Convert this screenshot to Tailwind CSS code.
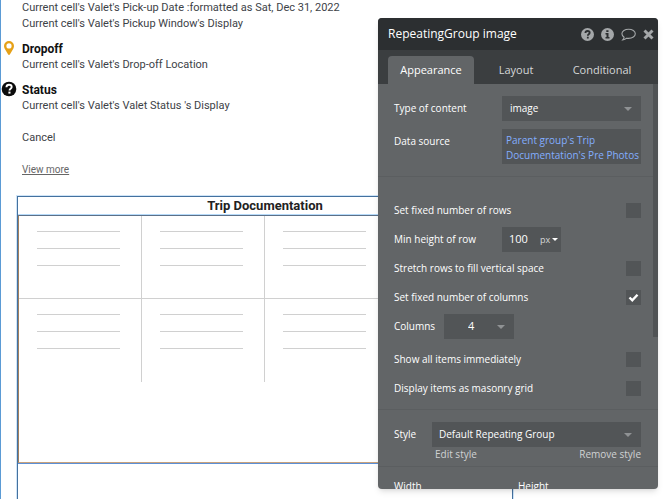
<!DOCTYPE html>
<html lang="en">
<head>
    <meta charset="UTF-8">
    <title>RepeatingGroup image</title>
    <script src="https://cdn.jsdelivr.net/npm/@tailwindcss/browser@4"></script>
</head>
<body class="relative h-screen overflow-hidden bg-white font-['Roboto',sans-serif] text-[11px] text-[#3d4247]">
    <!-- Canvas -->
    <main class="flex h-full flex-col border-l border-[#5b9bd5]">
        <section class="pl-[21px] leading-4">
            <p>Current cell's Valet's Pick-up Date :formatted as Sat, Dec 31, 2022</p>
            <p>Current cell's Valet's Pickup Window's Display</p>
            <div class="relative mt-[9px]">
                <svg class="absolute -left-[19px] -top-px h-4 w-3" viewBox="0 0 12 16" fill="#e6a117">
                    <path fill-rule="evenodd" d="M6 1a5 5 0 0 1 5 5c0 1-.3 1.800-.6 2.500L7 14.200c-.4.900-1.600.9-2 0L1.600 8.500C1.300 7.800 1 7 1 6a5 5 0 0 1 5-5zm0 2.300a2.600 2.600 0 1 0 0 5.200 2.600 2.600 0 0 0 0-5.200z"/>
                </svg>
                <h2 class="text-xs leading-4 font-bold text-[#111]">Dropoff</h2>
                <p>Current cell's Valet's Drop-off Location</p>
            </div>
            <div class="relative mt-[9px]">
                <svg class="absolute -left-[21px] -top-px size-4" viewBox="0 0 16 16">
                    <circle cx="8" cy="8" r="7.300" fill="#0b0b0b"/>
                    <path d="M5.400 6.200C5.500 4.500 6.600 3.700 8 3.700c1.600 0 2.700.9 2.700 2.200 0 1.800-2.200 1.900-2.200 3.500" fill="none" stroke="#fff" stroke-width="1.900"/>
                    <path d="M7.400 10.600h2.100v2H7.400z" fill="#fff"/>
                </svg>
                <h2 class="text-xs leading-4 font-bold text-[#111]">Status</h2>
                <p>Current cell's Valet's Valet Status 's Display</p>
            </div>
            <p class="mt-4">Cancel</p>
            <a href="#" class="mt-4 inline-block text-[10px] text-[#666] underline">View more</a>
        </section>

        <section class="ml-4 mr-[155px] mt-[18px] flex grow flex-col border border-b-0 border-[#44719f] ring-1 ring-[#cfe4f7]">
            <h2 class="border-b border-[#b5dafa] text-center text-[13px] leading-[17px] font-bold text-[#222]">Trip Documentation</h2>
            <div class="border-b border-[#5b8fd6]">
                <div class="h-[248px] border border-t-[#5c7088] border-b-[#c9a27c] border-l-[#a08060] border-r-[#a08060]">
                    <div id="cells" class="grid grid-cols-4"></div>
                </div>
            </div>
        </section>
    </main>

    <!-- Property editor -->
    <aside class="absolute right-[10px] top-[18px] flex h-[471px] w-[280px] flex-col overflow-hidden rounded bg-[#626567] font-['Open_Sans',sans-serif] text-[11px] text-white shadow-md">
        <header class="flex h-8 shrink-0 items-center bg-[#2c2f31] pl-[10px] pr-1">
            <h1 class="grow text-xs">RepeatingGroup image</h1>
            <div class="flex items-center gap-[7px]">
                <button aria-label="Help">
                    <svg class="size-[13px]" viewBox="0 0 13 13">
                        <circle cx="6.500" cy="6.500" r="6.500" fill="#a4a7a9"/>
                        <path d="M4.400 5C4.500 3.700 5.400 3 6.500 3c1.300 0 2.200.7 2.200 1.800 0 1.500-1.900 1.500-1.900 2.900" fill="none" stroke="#2c2f31" stroke-width="1.800"/>
                        <path d="M5.900 8.700h1.800v1.700H5.900z" fill="#2c2f31"/>
                    </svg>
                </button>
                <button aria-label="Info">
                    <svg class="size-[13px]" viewBox="0 0 13 13">
                        <circle cx="6.500" cy="6.500" r="6.500" fill="#a4a7a9"/>
                        <path d="M5.300 2.200h2.200v1.700H5.300zM4.500 5h3v4h1v1.500h-4V9h1V6.400h-1z" fill="#2c2f31"/>
                    </svg>
                </button>
                <button aria-label="Comment">
                    <svg class="h-[13px] w-[15px]" viewBox="0 0 15 13" fill="none" stroke="#a4a7a9" stroke-width="1.100">
                        <path d="M7.600 1.200c3.700 0 6.700 2 6.700 4.600s-3 4.600-6.700 4.600c-.7 0-1.300-.1-1.900-.2-1.100 1-2.400 1.600-4 1.700.8-.8 1.300-1.600 1.400-2.700C1.700 8.300.9 7.100.9 5.800c0-2.600 3-4.600 6.700-4.600z"/>
                    </svg>
                </button>
                <button aria-label="Close">
                    <svg class="size-[11px]" viewBox="0 0 11 11" stroke="#a4a7a9" stroke-width="3">
                        <path d="M1.500 1.500l8 8M9.500 1.500l-8 8"/>
                    </svg>
                </button>
            </div>
        </header>

        <nav class="flex h-[34px] shrink-0 items-end bg-[#3b3e40] pl-[10px] text-[#d5d7d8]">
            <button class="h-7 w-[86px] rounded-t bg-[#626567] text-white">Appearance</button>
            <button class="h-7 w-[84px]">Layout</button>
            <button class="h-7 w-[88px]">Conditional</button>
        </nav>

        <div class="relative grow overflow-hidden">
            <div class="absolute right-0 top-0 h-[253px] w-[5px] bg-[#505355]"></div>
            <form class="text-[10px]">
                <div class="flex flex-col gap-2 border-b border-[#5b5e60] pt-3 pr-[17px] pb-3 pl-4">
                    <div class="flex h-[25px] items-center">
                        <label for="type" class="w-[108px]">Type of content</label>
                        <div class="relative grow">
                            <select id="type" class="h-[25px] w-full appearance-none bg-[#525557] px-2"><option>image</option></select>
                            <span class="pointer-events-none absolute right-[9px] top-[11px] border-x-4 border-t-4 border-x-transparent border-t-[#8f9294]"></span>
                        </div>
                    </div>
                    <div class="flex">
                        <label for="source" class="w-[108px] pt-[5px]">Data source</label>
                        <button id="source" type="button" class="h-[35px] grow bg-[#525557] pt-[3px] pl-1 text-left leading-[15px] text-[#83aeff]">Parent group's Trip<br>Documentation's Pre Photos</button>
                    </div>
                </div>

                <div class="flex flex-col gap-1 border-b border-[#5b5e60] pt-[21px] pr-[17px] pb-[8px] pl-4">
                    <div class="flex h-[25px] items-center justify-between">
                        <label for="rows">Set fixed number of rows</label>
                        <input id="rows" type="checkbox" class="size-[15px] appearance-none bg-[#525557]">
                    </div>
                    <div class="flex h-[25px] items-center">
                        <label for="minheight" class="w-[108px]">Min height of row</label>
                        <div class="flex h-[25px] w-[59px] items-center bg-[#525557]">
                            <input id="minheight" type="text" value="100" class="w-[38px] pl-[7px] text-[11px]">
                            <button type="button" class="flex items-center gap-[2px] text-[9px] text-[#d5d7d8]">px<span class="border-x-3 border-t-3 border-x-transparent border-t-white"></span></button>
                        </div>
                    </div>
                    <div class="flex h-[25px] items-center justify-between">
                        <label for="stretch">Stretch rows to fill vertical space</label>
                        <input id="stretch" type="checkbox" class="size-[15px] appearance-none bg-[#525557]">
                    </div>
                    <div class="flex h-[25px] items-center justify-between">
                        <label for="fixedcols">Set fixed number of columns</label>
                        <div class="relative flex">
                            <input id="fixedcols" type="checkbox" checked class="size-[15px] appearance-none bg-[#525557]">
                            <svg class="pointer-events-none absolute inset-0 size-[15px]" viewBox="0 0 15 15" fill="none" stroke="#fff" stroke-width="2.400">
                                <path d="M3.500 7.500l2.800 2.800 5.200-5.600"/>
                            </svg>
                        </div>
                    </div>
                    <div class="flex h-[25px] items-center">
                        <label for="columns" class="w-[50px]">Columns</label>
                        <div class="relative">
                            <select id="columns" class="h-[25px] w-[70px] appearance-none bg-[#525557] pl-6 text-[11px]"><option>4</option></select>
                            <span class="pointer-events-none absolute right-[9px] top-[11px] border-x-4 border-t-4 border-x-transparent border-t-[#8f9294]"></span>
                        </div>
                    </div>
                    <div class="mt-1 flex h-[25px] items-center justify-between">
                        <label for="showall">Show all items immediately</label>
                        <input id="showall" type="checkbox" class="size-[15px] appearance-none bg-[#525557]">
                    </div>
                    <div class="flex h-[25px] items-center justify-between">
                        <label for="masonry">Display items as masonry grid</label>
                        <input id="masonry" type="checkbox" class="size-[15px] appearance-none bg-[#525557]">
                    </div>
                </div>

                <div class="border-b border-[#5b5e60] pt-3 pr-[17px] pb-[4px] pl-4">
                    <div class="flex h-[25px] items-center">
                        <label for="style" class="w-[38px]">Style</label>
                        <div class="relative grow">
                            <select id="style" class="h-[25px] w-full appearance-none bg-[#525557] px-[7px]"><option>Default Repeating Group</option></select>
                            <span class="pointer-events-none absolute right-[9px] top-[11px] border-x-4 border-t-4 border-x-transparent border-t-[#8f9294]"></span>
                        </div>
                    </div>
                    <div class="flex justify-between pl-[41px] leading-[15px] text-[#d0d2d3]">
                        <a href="#">Edit style</a>
                        <a href="#">Remove style</a>
                    </div>
                </div>

                <div class="flex pt-3 pl-4">
                    <span class="w-[124px]">Width</span>
                    <span>Height</span>
                </div>
            </form>
        </div>
    </aside>

    <script>
        // two rows of four placeholder cells
        const cells = document.getElementById('cells');
        for (let i = 0; i < 8; i++) {
            const cell = document.createElement('div');
            cell.className = 'flex h-[83px] flex-col gap-4 border-r border-[#d0d0d0] pl-[18px] pr-[21px] pt-[15px]' + (i < 4 ? ' border-b' : '');
            cell.innerHTML = '<hr class="border-[#d0d0d0]"><hr class="border-[#d0d0d0]"><hr class="border-[#d0d0d0]">';
            cells.appendChild(cell);
        }
    </script>
</body>
</html>
